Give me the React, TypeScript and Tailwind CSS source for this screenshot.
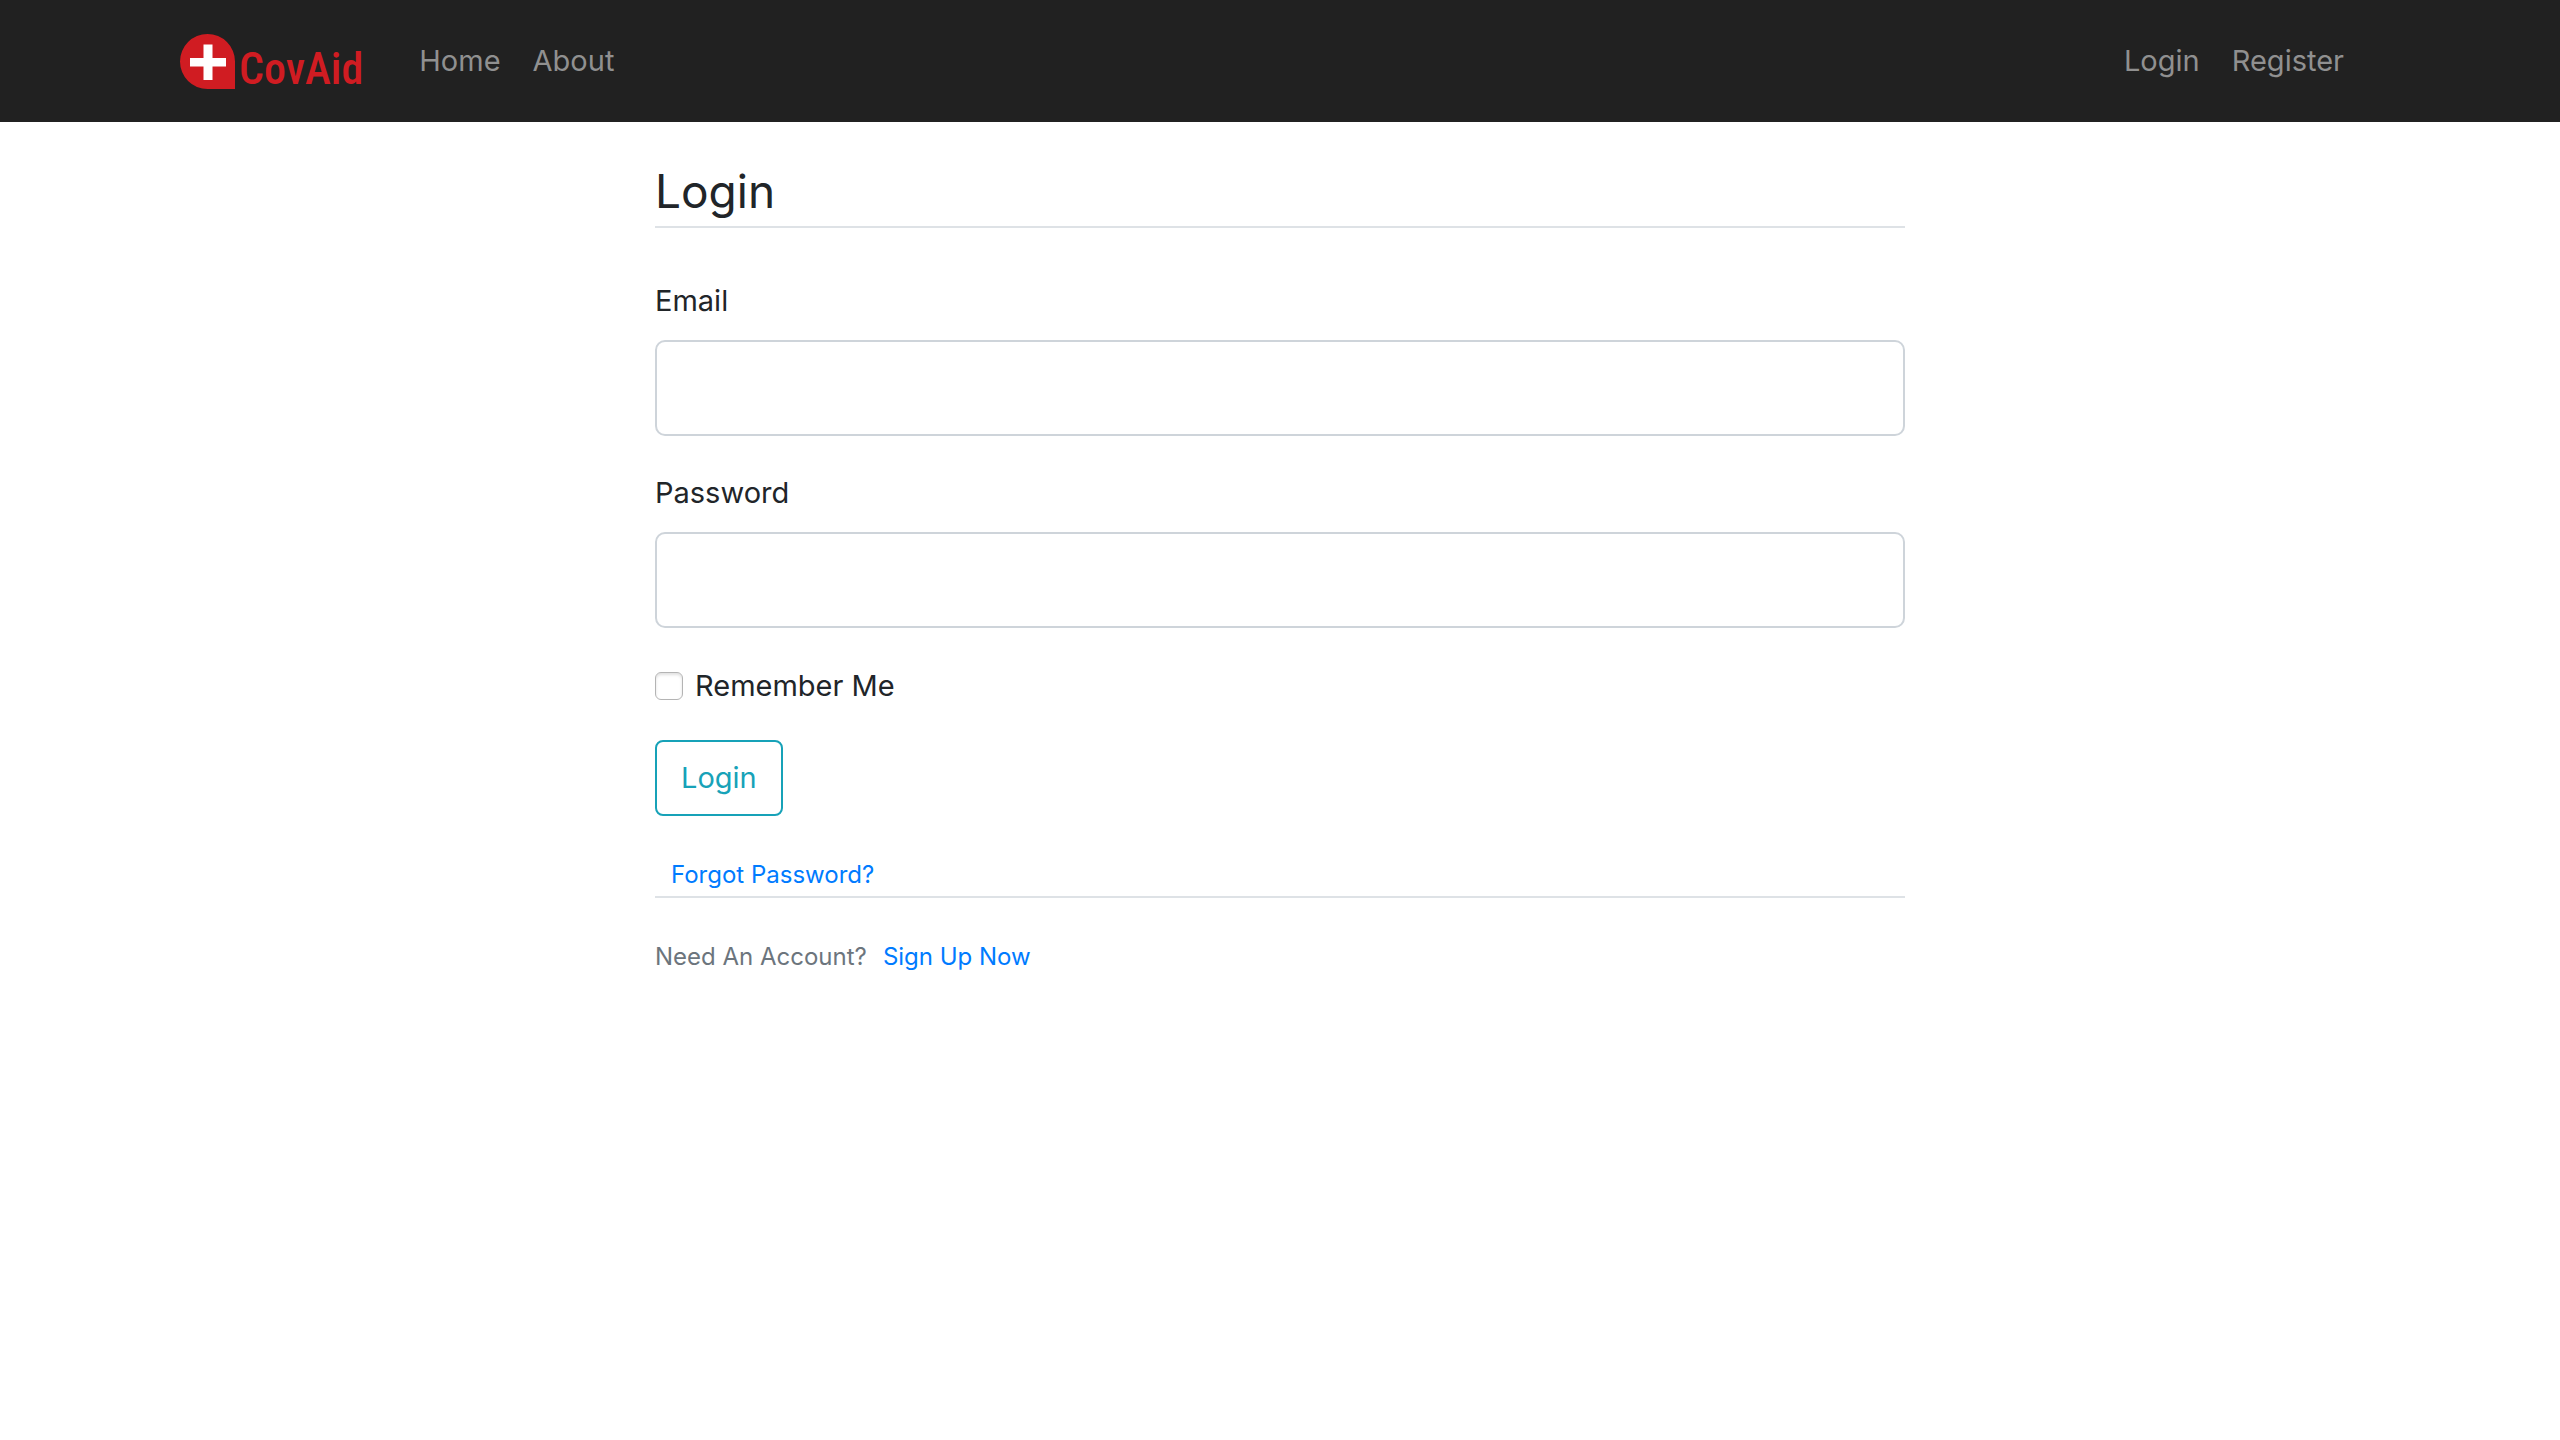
import React, { useState } from 'react';

interface NavLink {
  label: string;
  href: string;
}

const mainLinks: NavLink[] = [
  { label: 'Home', href: '#home' },
  { label: 'About', href: '#about' },
];

const userLinks: NavLink[] = [
  { label: 'Login', href: '#login' },
  { label: 'Register', href: '#register' },
];

const Logo: React.FC = () => (
  <a href="#home" className="flex items-end gap-1 text-[#d01c22]">
    <svg viewBox="0 0 55 55" className="h-[55px] w-[55px]" aria-hidden="true">
      <path d="M27.5 0A27.5 27.5 0 0 1 55 27.5V55H27.5A27.5 27.5 0 0 1 27.5 0Z" fill="currentColor" />
      <path d="M23.5 10.5h9V24H46v8.5H32.5V46h-9V32.5H10V24h13.5Z" fill="#fff" />
    </svg>
    <span className="font-['Roboto_Condensed','Liberation_Sans_Narrow','Roboto',sans-serif] text-[44px] leading-[40px] font-medium">
      CovAid
    </span>
  </a>
);

const NavLinks: React.FC<{ links: NavLink[] }> = ({ links }) => (
  <div className="flex gap-8">
    {links.map((link) => (
      <a key={link.label} href={link.href} className="text-[29px] leading-[48px] text-[#909090] hover:text-white">
        {link.label}
      </a>
    ))}
  </div>
);

const Navbar: React.FC = () => (
  <nav className="flex h-[122px] items-center bg-[#212121] pr-[216px] pl-[180px]">
    <Logo />
    <div className="ml-14 flex flex-1 justify-between">
      <NavLinks links={mainLinks} />
      <NavLinks links={userLinks} />
    </div>
  </nav>
);

interface FieldProps {
  id: string;
  label: string;
  type: string;
  value: string;
  onChange: (value: string) => void;
}

const Field: React.FC<FieldProps> = ({ id, label, type, value, onChange }) => (
  <div className="flex flex-col gap-3.5">
    <label htmlFor={id} className="text-[29px] leading-[50px]">{label}</label>
    <input
      id={id}
      type={type}
      value={value}
      onChange={(e) => onChange(e.target.value)}
      className="h-24 w-full rounded-[10px] border-2 border-[#ced4da] bg-white px-6 text-[29px] outline-none focus:border-[#80bdff]"
    />
  </div>
);

export default function App() {
  const [email, setEmail] = useState('');
  const [password, setPassword] = useState('');
  const [remember, setRemember] = useState(false);

  return (
    <div className="min-h-screen bg-white font-['Inter',sans-serif] text-[#212529]">
      <Navbar />
      <main className="mx-auto max-w-[1250px] pt-[42px]">
        <form onSubmit={(e) => e.preventDefault()}>
          <h1 className="border-b-2 border-[#dee2e6] pb-2 text-[46px] leading-[54px]">Login</h1>
          <div className="mt-12 flex flex-col gap-8">
            <Field id="email" label="Email" type="email" value={email} onChange={setEmail} />
            <Field id="password" label="Password" type="password" value={password} onChange={setPassword} />
            <div className="flex h-[52px] items-center gap-3">
              <input
                id="remember"
                type="checkbox"
                checked={remember}
                onChange={(e) => setRemember(e.target.checked)}
                className="h-7 w-7 appearance-none rounded-md border border-[#b4b4b4] bg-white shadow-[inset_0_2px_3px_rgba(0,0,0,0.12)] checked:bg-[#007bff]"
              />
              <label htmlFor="remember" className="text-[29px] leading-[48px]">Remember Me</label>
            </div>
          </div>
          <button
            type="submit"
            className="mt-7 h-[76px] rounded-lg border-2 border-[#17a2b8] px-6 text-[29px] leading-[48px] text-[#17a2b8] hover:bg-[#17a2b8] hover:text-white"
          >
            Login
          </button>
          <div className="mt-10 border-b-2 border-[#dee2e6] pb-0.5 pl-4 text-2xl leading-[38px]">
            <a href="#reset" className="text-[#007bff] hover:underline">Forgot Password?</a>
          </div>
        </form>
        <div className="mt-10 flex gap-4 text-2xl leading-[38px] text-[#6c757d]">
          <span>Need An Account?</span>
          <a href="#register" className="text-[#007bff] hover:underline">Sign Up Now</a>
        </div>
      </main>
    </div>
  );
}
